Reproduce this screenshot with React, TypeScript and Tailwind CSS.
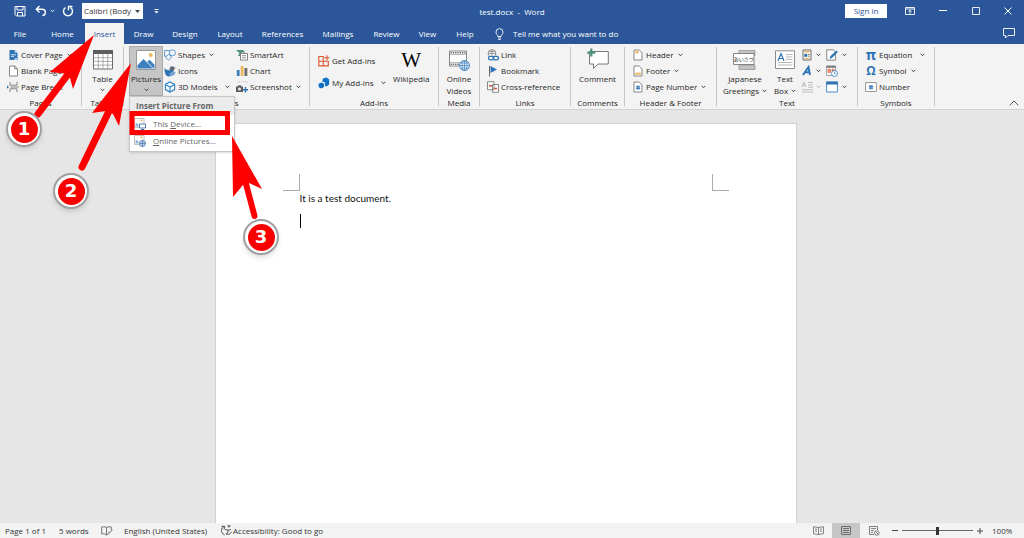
import React from 'react';

type IconProps = { className?: string };

/* ---------- small shared pieces ---------- */

const Caret: React.FC<IconProps> = ({ className = '' }) => (
  <svg viewBox="0 0 5 4" className={`h-1 w-[5px] shrink-0 ${className}`} fill="none" stroke="currentColor" strokeWidth="0.9">
    <path d="M0.7 0.9 2.5 2.7 4.3 0.9" />
  </svg>
);

type SmallButtonProps = {
  icon: React.ReactNode;
  label: string;
  caret?: boolean;
  caretGap?: string;
};

const SmallButton: React.FC<SmallButtonProps> = ({ icon, label, caret, caretGap = 'ml-1' }) => (
  <button className="flex h-4 items-center whitespace-nowrap hover:bg-[#d5d5d5]">
    <span className="mr-0.5 flex w-3 shrink-0 justify-center">{icon}</span>
    <span>{label}</span>
    {caret && <Caret className={caretGap} />}
  </button>
);

type GroupProps = {
  name: string;
  width: string;
  children: React.ReactNode;
};

const Group: React.FC<GroupProps> = ({ name, width, children }) => (
  <section aria-label={name} className={`flex shrink-0 ${width}`}>
    <div className="flex min-w-0 grow flex-col">
      <div className="flex h-[54px] pt-[3px]">{children}</div>
      <div className="text-center whitespace-nowrap">{name}</div>
    </div>
    <div className="my-[3px] w-px bg-[#c6c6c6]" />
  </section>
);

/* ---------- icons ---------- */

const CoverPageIcon = () => (
  <svg viewBox="0 0 11 12" className="h-3 w-[11px]">
    <path d="M1.5 1h5.2L9.5 3.8V11h-8z" fill="#2e74b5" />
    <path d="M6.7 1v2.8h2.8z" fill="#bcd5ec" />
    <path d="M3 5.8h5M3 7.4h3" stroke="#fff" strokeWidth="0.8" />
    <path d="M6.2 9h3.3v2H6.2z" fill="#9cc3e5" />
  </svg>
);
const BlankPageIcon = () => (
  <svg viewBox="0 0 11 12" className="h-3 w-[11px]" fill="#fff" stroke="#6b6b6b" strokeWidth="0.8">
    <path d="M1.5 1h5.2L9.5 3.8V11h-8z" />
    <path d="M6.7 1v2.8h2.8" fill="none" />
  </svg>
);
const PageBreakIcon = () => (
  <svg viewBox="0 0 12 12" className="h-3 w-3" fill="none" stroke="#6b6b6b" strokeWidth="0.8">
    <path d="M3 .8v3.4h7V.8M3 11.2V7.8h7v3.4M3.5 6H12" />
    <path d="M0 4.2 2 6 0 7.8z" fill="#2e74b5" stroke="none" />
  </svg>
);
const TableIcon = () => (
  <svg viewBox="0 0 20 20" className="h-5 w-5">
    <path d="M.5.5h19v18.5H.5z" fill="#fff" stroke="#6b6b6b" />
    <path d="M0 0h20v4H0z" fill="#5d5d5d" />
    <path d="M5.3 4v15M10 4v15M14.7 4v15M1 7.7h18M1 11.4h18M1 15.1h18" stroke="#8c8c8c" strokeWidth="0.7" />
  </svg>
);
const PicturesIcon = () => (
  <svg viewBox="0 0 20 20" className="h-5 w-5">
    <path d="M.5.5h19v19H.5z" fill="#fff" stroke="#858585" strokeWidth="0.8" />
    <circle cx="14.7" cy="5" r="2" fill="#edb95e" />
    <path d="M1.5 18.5v-3.2L7.5 9l9.5 9.5z" fill="#3e7fbd" />
    <path d="m11.2 11.8 2.4-2 4.9 5v3.7h-.9z" fill="#3e7fbd" />
  </svg>
);
const ShapesIcon = () => (
  <svg viewBox="0 0 12 12" className="h-3 w-3" fill="#f3f8fd" stroke="#3e7fbd" strokeWidth="0.8">
    <path d="M.6 1.6h5.8v5.6H.6z" />
    <circle cx="8.4" cy="3.8" r="3" />
    <path d="m4.5 5.2 3.1 3-3.1 3-3-3z" />
  </svg>
);
const IconsIcon = () => (
  <svg viewBox="0 0 12 12" className="h-3 w-3">
    <path d="M5.5 4.8C5.3 2 7.3.6 9 1.4c.8.3 1 .8 1.2 1.1l1.5.2-1.4 1.3c0 1.7-1.2 2.6-2.8 2.6z" fill="#5f6b76" />
    <path d="M.5 3c1.500 2.200 4.500 2.400 8.500 2.300 1 3.700-1 6.200-4.200 6.200C2.200 11.500.3 8 .5 3z" fill="#2e74b5" />
    <path d="M5 10c1-3 3.500-4 6.500-3-.3 3-3.300 5-6.500 3z" fill="#70a5d3" />
  </svg>
);
const ModelsIcon = () => (
  <svg viewBox="0 0 12 12" className="h-3 w-3" fill="#fff" stroke="#2680c8" strokeWidth="1.1">
    <path d="m6 .9 4.6 2.5v5.2L6 11.1 1.4 8.6V3.4z" />
    <path d="M1.4 3.4 6 6l4.6-2.6M6 6v5" />
  </svg>
);
const SmartArtIcon = () => (
  <svg viewBox="0 0 12 12" className="h-3 w-3">
    <path d="M0 1h7l2.5 2.5H5V7H2L3.5 4z" fill="#4d9277" />
    <path d="M4.5 4.5h7v6.6h-7z" fill="#fff" stroke="#6b6b6b" strokeWidth="0.8" />
    <path d="M6 6.7h4M6 8.800h4" stroke="#6b6b6b" strokeWidth="0.7" />
  </svg>
);
const ChartIcon = () => (
  <svg viewBox="0 0 12 12" className="h-3 w-3">
    <path d="M.8 5h2.8v6H.8z" fill="#3e7fbd" />
    <path d="M4.7 1h2.8v10H4.7z" fill="#edb95e" />
    <path d="M8.5 3h2.8v8H8.5z" fill="#6b6b6b" />
  </svg>
);
const ScreenshotIcon = () => (
  <svg viewBox="0 0 12 12" className="h-3 w-3">
    <path d="M3 .7h7.5M2 .7v2M11 .7v2" stroke="#9a9a9a" strokeWidth="0.6" strokeDasharray="1 1" fill="none" />
    <path d="M0 5.5h1.7l.8-1.3h2.2l.8 1.3H7V11H0z" fill="#5d5d5d" />
    <circle cx="3.5" cy="8" r="1.6" fill="#e8e8e8" />
    <path d="M9.5 6v5.5M6.9 8.8H12" stroke="#2e74b5" strokeWidth="1.4" />
  </svg>
);
const GetAddinsIcon = () => (
  <svg viewBox="0 0 12 12" className="h-3 w-3" fill="none" stroke="#e0552f" strokeWidth="1.1">
    <path d="M.8 1.5h4.5v4.7H.8zM.8 6.2h4.5v4.7H.8zM5.3 6.2h5v4.7h-5zM9 .2v5M6.5 2.700h5" />
  </svg>
);
const MyAddinsIcon = () => (
  <svg viewBox="0 0 12 12" className="h-3 w-3" fill="#0f6fc6">
    <path d="M5 1.5 8.500.6l2.7 1.800v5L8.500 9.600 7 8.800V5.600L4.200 4.600z" />
    <path d="m3.2 5.4 2.900 1.400v3.100L3.200 11.400.6 9.900V6.800z" />
  </svg>
);
const OnlineVideosIcon = () => (
  <svg viewBox="0 0 21 21" className="h-[21px] w-[21px]">
    <path d="M.5 1h17v15H.5z" fill="#fff" stroke="#6b6b6b" strokeWidth="0.8" />
    <path d="M1.5 2.7h15M1.5 14.3h15" stroke="#5d5d5d" strokeWidth="1.4" strokeDasharray="1.3 1" />
    <path d="M1 4.5h16M1 12.5h16" stroke="#8c8c8c" strokeWidth="0.6" />
    <circle cx="15.5" cy="15.5" r="5" fill="#e8f1f9" stroke="#3e7fbd" strokeWidth="0.9" />
    <path d="M10.5 15.5h10M15.5 10.5v10M11.5 13h8M11.5 18h8" stroke="#3e7fbd" strokeWidth="0.7" />
    <ellipse cx="15.5" cy="15.5" rx="2.4" ry="5" fill="none" stroke="#3e7fbd" strokeWidth="0.7" />
  </svg>
);
const LinkIcon = () => (
  <svg viewBox="0 0 12 12" className="h-3 w-3" fill="none">
    <circle cx="5" cy="4.5" r="3.9" stroke="#6b6b6b" strokeWidth="0.7" />
    <path d="M1.2 4.5h7.600M5 .6v7.500M2 2.500h6" stroke="#6b6b6b" strokeWidth="0.6" />
    <path d="M1.5 6.5h10v5h-10z" fill="#f3f3f3" />
    <rect x="1.4" y="7.4" width="5.5" height="3.4" rx="1.7" stroke="#2e74b5" strokeWidth="1.2" />
    <rect x="6" y="7.4" width="5.5" height="3.4" rx="1.7" stroke="#2e74b5" strokeWidth="1.2" />
  </svg>
);
const BookmarkIcon = () => (
  <svg viewBox="0 0 12 12" className="h-3 w-3">
    <path d="M2.5.8v10.700" stroke="#6b6b6b" />
    <path d="m3.5 1 6.500 3.500L3.500 8z" fill="#2e74b5" />
  </svg>
);
const CrossRefIcon = () => (
  <svg viewBox="0 0 12 12" className="h-3 w-3" fill="#fff" stroke="#6b6b6b" strokeWidth="0.8">
    <path d="M.5.7H7v8H.5zM5.5 3.5h6v7.800h-6z" />
    <path d="M2 4.7h3M7 7.500h3" stroke="#d1492e" strokeWidth="1.4" />
  </svg>
);
const CommentIcon = () => (
  <svg viewBox="0 0 22 22" className="h-[22px] w-[22px]">
    <path d="M2.5 3.5h18.800V16H11l-4.500 4.500V16h-4z" fill="#fff" stroke="#6b6b6b" strokeWidth="0.9" />
    <path d="M4.3.6v8M.3 4.600h8" stroke="#4d9277" strokeWidth="2.2" />
  </svg>
);

type PageIconProps = { children: React.ReactNode };

const PageIcon: React.FC<PageIconProps> = ({ children }) => (
  <svg viewBox="0 0 10 12" className="h-3 w-[10px]">
    <path d="M1 1h5.200L9 3.800V11H1z" fill="#fff" stroke="#6b6b6b" strokeWidth="0.8" />
    {children}
  </svg>
);
const HeaderIcon = () => (
  <PageIcon>
    <path d="M2.2 2.2h3.500v2H2.200z" fill="#edb95e" />
  </PageIcon>
);
const FooterIcon = () => (
  <PageIcon>
    <path d="M2.2 7.7h5.600v2H2.200z" fill="#edb95e" />
  </PageIcon>
);
const PageNumberIcon = () => (
  <PageIcon>
    <path d="M4.3 4.5v4.200M5.900 4.500v4.200M3 5.800h4.200M3 7.400h4.200" stroke="#2e74b5" strokeWidth="0.9" />
  </PageIcon>
);

const GreetingsIcon = () => (
  <svg viewBox="0 0 24 20" className="h-5 w-6">
    <path d="M6 .5h16v5H6zM6 15h16v4.500H6z" fill="#c4c4c4" stroke="#8c8c8c" strokeWidth="0.7" />
    <path d="M.5 3.5H21v11H.5z" fill="#fff" stroke="#6b6b6b" strokeWidth="0.8" />
    <text x="10.8" y="11.2" fontSize="5" textAnchor="middle" fill="#222" className="font-['Noto_Sans_CJK_JP',sans-serif]">
      あいさつ
    </text>
  </svg>
);
const TextBoxIcon = () => (
  <svg viewBox="0 0 20 20" className="h-5 w-5">
    <path d="M.5.8h19v17.700H.5z" fill="#fff" stroke="#8c8c8c" />
    <path d="M3 11 6 3.500 9 11M4 8.500h4" fill="none" stroke="#2e74b5" strokeWidth="1.2" />
    <path d="M11 4.500h6.500M11 7h6.500M11 9.500h6.500M3 12.500h14.500M3 15h14.500" stroke="#9a9a9a" strokeWidth="0.7" />
  </svg>
);
const QuickPartsIcon = () => (
  <svg viewBox="0 0 12 12" className="h-3 w-3">
    <path d="M2 1h8v10H2z" fill="#fff" stroke="#6b6b6b" />
    <path d="M3.3 2.7h5.400" stroke="#edb95e" strokeWidth="1.6" />
    <path d="M3.3 4.8h3v3h-3z" fill="#2e74b5" />
    <path d="M7 5.500h2M7 7.200h2" stroke="#6b6b6b" strokeWidth="0.8" />
    <path d="M3.3 9.4h5.400" stroke="#edb95e" strokeWidth="1.2" />
  </svg>
);
const WordArtIcon = () => (
  <svg viewBox="0 0 12 12" className="h-3 w-3" fill="none" stroke="#2e74b5" strokeWidth="1.9">
    <path d="M2 10 7.500 2 9 10M4 7.300h4.500" />
  </svg>
);
const DropCapIcon = () => (
  <svg viewBox="0 0 12 12" className="h-3 w-3" fill="none" stroke="#b0b0b0" strokeWidth="0.8">
    <path d="M.8 6 2.800 1l2 5M1.500 4.300h2.600M7 1.500h5M7 4h5M7 6.300h5M1 8.700h11M1 11h11" />
  </svg>
);
const SignatureIcon = () => (
  <svg viewBox="0 0 12 12" className="h-3 w-3">
    <path d="M.8.8h6.500L9.500 3v8.200H.8z" fill="#fff" stroke="#6b6b6b" strokeWidth="0.8" />
    <path d="m3.5 10 1-3 5.800-5.500 1.500 1.500L6.300 8.700z" fill="#2e74b5" />
  </svg>
);
const DateIcon = () => (
  <svg viewBox="0 0 12 12" className="h-3 w-3">
    <path d="M.6 1h9v9.500h-9z" fill="#fff" stroke="#8c8c8c" strokeWidth="0.8" />
    <path d="M.6.8h9v2h-9z" fill="#7a7a7a" />
    <path d="M2 4.300h2.500v3H2zM6 4.300h2v1.500H6z" fill="#f3b49c" stroke="#e0552f" strokeWidth="0.8" />
    <circle cx="8.5" cy="8.5" r="3" fill="#fff" stroke="#3e7fbd" strokeWidth="0.9" />
    <path d="M8.5 6.8v1.900h1.400" stroke="#3e7fbd" strokeWidth="0.8" fill="none" />
  </svg>
);
const ObjectIcon = () => (
  <svg viewBox="0 0 12 12" className="h-3 w-3">
    <path d="M.6 1h10.800v10H.6z" fill="#fff" stroke="#3e7fbd" strokeWidth="0.9" />
    <path d="M.2.7h11.600v2.800H.2z" fill="#2e74b5" />
  </svg>
);
const NumberIcon = () => (
  <svg viewBox="0 0 12 12" className="h-3 w-3">
    <path d="M.6 1.500h10.800v9H.6z" fill="#fff" stroke="#8c8c8c" strokeWidth="0.9" />
    <path d="M5.2 4v4.500M6.900 4v4.500M3.800 5.400h4.500M3.800 7.100h4.500" stroke="#2e74b5" strokeWidth="0.9" />
  </svg>
);
const PictureSourceIcon: React.FC<{ online?: boolean }> = ({ online }) => (
  <svg viewBox="0 0 12 12" className="h-3 w-3">
    <path d="M.5.5H10v9H.5z" fill="#fafafa" stroke="#a8a8a8" strokeWidth="0.7" />
    <path d="M1.5 8.500V6l1.300-1 1.700 1.500v2z" fill="#8fb3d6" />
    <circle cx="7.5" cy="2.5" r="0.9" fill="#edb95e" />
    {online ? (
      <>
        <circle cx="8.5" cy="8.5" r="3" fill="#c4d9ee" stroke="#3e6fa8" strokeWidth="0.8" />
        <path d="M5.5 8.500h6M8.500 5.500v6" stroke="#3e6fa8" strokeWidth="0.7" />
      </>
    ) : (
      <>
        <path d="M5.5 6h6v4h-6z" fill="#fff" stroke="#3e6fa8" strokeWidth="0.9" />
        <path d="M7 11.500h3" stroke="#3e6fa8" />
      </>
    )}
  </svg>
);

/* ---------- title bar and tabs ---------- */

const TitleBar = () => (
  <header className="grid h-[22px] grid-cols-[1fr_auto_1fr] items-center text-white">
    <div className="flex items-center pl-[14px]">
      <button aria-label="Save" className="mr-[9px]">
        <svg viewBox="0 0 12 12" className="h-3 w-3" fill="none" stroke="currentColor">
          <path d="M1 1.500h10v9.500H2.500L1 9.500zM3 1.500v3.500h6V1.500M3.500 11V7.500h5V11" />
        </svg>
      </button>
      <button aria-label="Undo" className="flex items-center">
        <svg viewBox="0 0 12 12" className="h-3 w-3" fill="none" stroke="currentColor" strokeWidth="1.4">
          <path d="M4.5 1 1.300 4.200l3.200 3.200M1.500 4.200h5.700c4 0 4.300 5.800.3 6.300" />
        </svg>
        <Caret className="ml-[3px]" />
      </button>
      <button aria-label="Redo" className="ml-[7px]">
        <svg viewBox="0 0 12 12" className="h-3 w-3" fill="none" stroke="currentColor" strokeWidth="1.4">
          <path d="M3.5 2.500a4.500 4.500 0 1 0 5 0M6.500 5.300V1.500h4" />
        </svg>
      </button>
      <div className="relative ml-2 flex items-center">
        <select aria-label="Font" className="h-4 w-[61px] appearance-none bg-white pl-0.5 text-[8px] leading-4 text-[#333]">
          <option>Calibri (Body</option>
        </select>
        <svg viewBox="0 0 5 3" className="pointer-events-none absolute right-[3px] h-[3px] w-[5px]" fill="#444">
          <path d="M0 0h5L2.500 3z" />
        </svg>
      </div>
      <button aria-label="Customize Quick Access Toolbar" className="ml-[11px]">
        <svg viewBox="0 0 5 5" className="h-[5px] w-[5px]" fill="currentColor">
          <path d="M.5 0h4v.9h-4zM.3 2.200h4.400L2.500 4.600z" />
        </svg>
      </button>
    </div>
    <h1 className="pt-0.5 text-[8px] whitespace-pre">test.docx  -  Word</h1>
    <div className="flex items-center justify-end pr-3">
      <button className="h-[14px] w-[42px] bg-white text-[8px] leading-[14px] text-[#2b579a]">Sign in</button>
      <button aria-label="Ribbon display options" className="ml-[18px]">
        <svg viewBox="0 0 10 8" className="h-2 w-[10px]" fill="none" stroke="currentColor" strokeWidth="0.9">
          <path d="M.5.5h9v7h-9zM.5 2h9M5 6.500V3.300M3.500 4.700 5 3.300l1.500 1.400" />
        </svg>
      </button>
      <button aria-label="Minimize" className="ml-6">
        <svg viewBox="0 0 8 8" className="h-2 w-2" stroke="currentColor">
          <path d="M0 3.500h8" />
        </svg>
      </button>
      <button aria-label="Maximize" className="ml-[25px]">
        <svg viewBox="0 0 8 8" className="h-2 w-2" fill="none" stroke="currentColor" strokeWidth="0.9">
          <path d="M.5.5h7v7h-7z" />
        </svg>
      </button>
      <button aria-label="Close" className="ml-6">
        <svg viewBox="0 0 8 8" className="h-2 w-2" stroke="currentColor">
          <path d="m.5.5 7 7M7.500.5l-7 7" />
        </svg>
      </button>
    </div>
  </header>
);

const TABS = [
  { name: 'File', width: 'w-10' },
  { name: 'Home', width: 'w-[45px]' },
  { name: 'Insert', width: 'w-[39px]' },
  { name: 'Draw', width: 'w-[39px]' },
  { name: 'Design', width: 'w-11' },
  { name: 'Layout', width: 'w-[46px]' },
  { name: 'References', width: 'w-[59px]' },
  { name: 'Mailings', width: 'w-[52px]' },
  { name: 'Review', width: 'w-[45px]' },
  { name: 'View', width: 'w-[37px]' },
  { name: 'Help', width: 'w-[38px]' },
];

const TabStrip = () => (
  <nav className="flex h-[22px] items-end text-[8px] text-white">
    {TABS.map((tab) => (
      <button
        key={tab.name}
        className={`h-[21px] shrink-0 ${tab.width} ${tab.name === 'Insert' ? 'bg-[#f3f3f3] text-[#2b579a]' : ''}`}
      >
        {tab.name}
      </button>
    ))}
    <button className="ml-[11px] flex h-[21px] items-center gap-[9px] whitespace-nowrap">
      <svg viewBox="0 0 9 12" className="h-3 w-[9px]" fill="none" stroke="currentColor" strokeWidth="0.9">
        <path d="M2.8 8.500C2.800 6.800 1 6.300 1 4.100a3.500 3.500 0 0 1 7 0c0 2.200-1.800 2.700-1.800 4.400zM3 10h3M3.300 11.400h2.400" />
      </svg>
      Tell me what you want to do
    </button>
    <button aria-label="Comments" className="mr-[9px] mb-[5px] ml-auto">
      <svg viewBox="0 0 12 12" className="h-3 w-3" fill="none" stroke="currentColor" strokeWidth="0.9">
        <path d="M.5 1.500h11v7H5L2.500 11V8.500h-2z" />
      </svg>
    </button>
  </nav>
);

/* ---------- ribbon ---------- */

const PicturesMenu = () => (
  <div role="menu" className="absolute top-[49px] left-0 z-10 w-[106px] border border-[#c6c6c6] bg-white pb-0.5 text-[#666] shadow-sm">
    <div className="h-[18px] bg-[#ebebeb] pl-1.5 leading-[18px] font-bold whitespace-nowrap">Insert Picture From</div>
    <button role="menuitem" className="flex h-[17px] w-full items-center gap-[7px] pl-1 whitespace-nowrap">
      <PictureSourceIcon />
      <span>This <u>D</u>evice...</span>
    </button>
    <button role="menuitem" className="flex h-[17px] w-full items-center gap-[7px] pl-1 whitespace-nowrap">
      <PictureSourceIcon online />
      <span><u>O</u>nline Pictures...</span>
    </button>
  </div>
);

const Ribbon = () => (
  <div className="flex h-[66px] border-b border-[#d2d2d2] bg-[#f3f3f3] text-[8px] leading-3 text-[#262626]">
    <Group name="Pages" width="w-[82px]">
      <div className="pl-[7px]">
        <SmallButton icon={<CoverPageIcon />} label="Cover Page" caret />
        <SmallButton icon={<BlankPageIcon />} label="Blank Page" />
        <SmallButton icon={<PageBreakIcon />} label="Page Break" />
      </div>
    </Group>

    <Group name="Tables" width="w-[42px]">
      <button className="flex w-full flex-col items-center justify-start pt-[3px]">
        <TableIcon />
        <span className="mt-[3px]">Table</span>
        <Caret className="mt-[3px]" />
      </button>
    </Group>

    <Group name="Illustrations" width="w-[186px]">
      <div className="relative ml-[5px] flex h-[49px]">
        <button aria-haspopup="menu" aria-expanded="true" className="-mt-px flex w-[34px] flex-col items-center border border-[#ababab] bg-[#c5c5c5] pt-[3px]">
          <PicturesIcon />
          <span className="mt-[3px]">Pictures</span>
          <Caret className="mt-[3px]" />
        </button>
        <PicturesMenu />
      </div>
      <div className="w-[73px] pl-px">
        <SmallButton icon={<ShapesIcon />} label="Shapes" caret />
        <SmallButton icon={<IconsIcon />} label="Icons" />
        <SmallButton icon={<ModelsIcon />} label="3D Models" caret caretGap="ml-[7px]" />
      </div>
      <div>
        <SmallButton icon={<SmartArtIcon />} label="SmartArt" />
        <SmallButton icon={<ChartIcon />} label="Chart" />
        <SmallButton icon={<ScreenshotIcon />} label="Screenshot" caret />
      </div>
    </Group>

    <Group name="Add-ins" width="w-[129px]">
      <div className="flex w-[83px] flex-col gap-[6px] pt-[6px] pl-2">
        <SmallButton icon={<GetAddinsIcon />} label="Get Add-ins" />
        <SmallButton icon={<MyAddinsIcon />} label="My Add-ins" caret caretGap="ml-2" />
      </div>
      <button className="flex flex-col items-center justify-start pt-[3px]">
        <span className="h-5 font-['Liberation_Serif',serif] text-[21px] leading-5 text-black">W</span>
        <span className="mt-[3px]">Wikipedia</span>
      </button>
    </Group>

    <Group name="Media" width="w-[41px]">
      <button className="flex w-full flex-col items-center justify-start pt-[3px]">
        <OnlineVideosIcon />
        <span className="mt-0.5">Online</span>
        <span>Videos</span>
      </button>
    </Group>

    <Group name="Links" width="w-[91px]">
      <div className="pl-[7px]">
        <SmallButton icon={<LinkIcon />} label="Link" />
        <SmallButton icon={<BookmarkIcon />} label="Bookmark" />
        <SmallButton icon={<CrossRefIcon />} label="Cross-reference" />
      </div>
    </Group>

    <Group name="Comments" width="w-[54px]">
      <button className="flex w-full flex-col items-center justify-start pt-px">
        <CommentIcon />
        <span className="mt-[3px]">Comment</span>
      </button>
    </Group>

    <Group name="Header & Footer" width="w-[92px]">
      <div className="pl-[7px]">
        <SmallButton icon={<HeaderIcon />} label="Header" caret />
        <SmallButton icon={<FooterIcon />} label="Footer" caret />
        <SmallButton icon={<PageNumberIcon />} label="Page Number" caret />
      </div>
    </Group>

    <Group name="Text" width="w-[141px]">
      <button className="flex w-14 flex-col items-center justify-start pt-[3px]">
        <GreetingsIcon />
        <span className="mt-[3px]">Japanese</span>
        <span className="flex items-center gap-[3px]">Greetings <Caret /></span>
      </button>
      <button className="flex w-6 flex-col items-center justify-start pt-[3px]">
        <TextBoxIcon />
        <span className="mt-[3px]">Text</span>
        <span className="flex items-center gap-[3px]">Box <Caret /></span>
      </button>
      <div className="ml-1 grid grid-cols-[25px_auto] content-start">
        <button aria-label="Quick Parts" className="flex h-4 items-center gap-[3px]"><QuickPartsIcon /><Caret /></button>
        <button aria-label="Signature Line" className="flex h-4 items-center gap-1"><SignatureIcon /><Caret /></button>
        <button aria-label="WordArt" className="flex h-4 items-center gap-[3px]"><WordArtIcon /><Caret /></button>
        <button aria-label="Date and Time" className="flex h-4 items-center"><DateIcon /></button>
        <button aria-label="Drop Cap" className="flex h-4 items-center gap-[3px] text-[#b0b0b0]"><DropCapIcon /><Caret /></button>
        <button aria-label="Object" className="flex h-4 items-center gap-1"><ObjectIcon /><Caret /></button>
      </div>
    </Group>

    <Group name="Symbols" width="w-[77px]">
      <div className="pl-[7px]">
        <SmallButton icon={<span className="text-[14px] font-bold text-[#2e74b5]">π</span>} label="Equation" caret caretGap="ml-2" />
        <SmallButton icon={<span className="text-[12px] font-bold text-[#2e74b5]">Ω</span>} label="Symbol" caret />
        <SmallButton icon={<NumberIcon />} label="Number" />
      </div>
    </Group>

    <button aria-label="Collapse the Ribbon" className="mr-[5px] mb-[3px] ml-auto self-end">
      <svg viewBox="0 0 10 6" className="h-1.5 w-[10px]" fill="none" stroke="#555">
        <path d="M.7 5.300 5 1l4.300 4.300" />
      </svg>
    </button>
  </div>
);

/* ---------- document and status bar ---------- */

const DocumentArea = () => (
  <main className="flex grow justify-center bg-[#e6e6e6] pt-[13px] pr-[13px]">
    <article className="w-[582px] border border-b-0 border-[#d0d0d0] bg-white px-[67px] pt-[50px]">
      <div className="flex justify-between">
        <div className="h-[17px] w-[17px] border-r border-b border-[#ababab]" />
        <div className="h-[17px] w-[17px] border-b border-l border-[#ababab]" />
      </div>
      <div className="pl-[17px] font-['Lato',sans-serif] text-[10px] leading-[14px] text-[#111]">
        <p>It is a test document.</p>
        <div className="mt-[9px] h-[14px] w-px bg-black" />
      </div>
    </article>
  </main>
);

const StatusBar = () => (
  <footer className="flex h-[15px] items-center bg-[#f3f3f3] pl-[5px] text-[8px] whitespace-nowrap text-[#333]">
    <span className="w-[54px]">Page 1 of 1</span>
    <span className="w-[42px]">5 words</span>
    <button aria-label="Proofing" className="mr-[11px]">
      <svg viewBox="0 0 12 10" className="h-[10px] w-3" fill="none" stroke="#555" strokeWidth="0.8">
        <path d="M5.5 9V1.500C4 .7 2 .7.7 1v7c1.500-.3 3.300-.3 4.800 1 1-.9 2-1.100 3-1.200M5.500 1.500C7 .7 9 .7 10.300 1v3M7 5.500 8.500 7l3-3.500" />
      </svg>
    </button>
    <span className="w-24">English (United States)</span>
    <button className="flex items-center gap-px">
      <svg viewBox="0 0 12 11" className="h-[11px] w-3" fill="none" stroke="#444" strokeWidth="0.9">
        <path d="M4.5 1.500C.5 2.500.3 8 4.500 9.800M1.300 1.300l3.400.1-.6 3M8 1a1 1 0 1 1 0 .1M5 4.500l3 .7 3-.7M8 5.200V7L6 10M6.500 8l2 2L12 6.500" />
      </svg>
      Accessibility: Good to go
    </button>
    <div className="ml-auto flex h-full items-center">
      <button aria-label="Read Mode" className="flex h-full w-7 items-center justify-center">
        <svg viewBox="0 0 11 9" className="h-[9px] w-[11px]" fill="none" stroke="#666" strokeWidth="0.8">
          <path d="M5.5 8.500v-7L.5.7v7l5 .8 5-.8v-7l-5 .8M2 3l2 .3M2 5l2 .3M7 3.300 9 3M7 5.300 9 5" />
        </svg>
      </button>
      <button aria-label="Print Layout" className="flex h-full w-7 items-center justify-center bg-[#c6c6c6]">
        <svg viewBox="0 0 10 9" className="h-[9px] w-[10px]" fill="none" stroke="#555" strokeWidth="0.8">
          <path d="M.5.5h9v8h-9zM2 2.500h6M2 4.500h6M2 6.500h6" />
        </svg>
      </button>
      <button aria-label="Web Layout" className="flex h-full w-7 items-center justify-center">
        <svg viewBox="0 0 11 10" className="h-[10px] w-[11px]" fill="none" stroke="#666" strokeWidth="0.8">
          <path d="M5 8.500H.5v-8h8V4M2 2.500h5M2 4.500h3M2 6.500h2" />
          <circle cx="7.8" cy="7" r="2.3" />
          <path d="m6.5 5.500 3 3" />
        </svg>
      </button>
      <button aria-label="Zoom out" className="ml-1 h-px w-[6px] bg-[#444]" />
      <input
        type="range"
        aria-label="Zoom"
        defaultValue={50}
        className="mx-1 h-2 w-[71px] appearance-none bg-[linear-gradient(#666,#666)] bg-[length:100%_1px] bg-center bg-no-repeat [&::-webkit-slider-thumb]:h-2 [&::-webkit-slider-thumb]:w-[3px] [&::-webkit-slider-thumb]:appearance-none [&::-webkit-slider-thumb]:bg-[#333]"
      />
      <button aria-label="Zoom in">
        <svg viewBox="0 0 6 6" className="h-1.5 w-1.5" stroke="#444">
          <path d="M0 3h6M3 0v6" />
        </svg>
      </button>
      <span className="ml-[9px] w-8">100%</span>
    </div>
  </footer>
);

/* ---------- tutorial annotations, drawn over the window ---------- */

const STEPS = [
  { n: 1, place: 'top-[111px] left-[6px]' },
  { n: 2, place: 'top-[173px] left-[53px]' },
  { n: 3, place: 'top-[219px] left-[243px]' },
];

const Annotations = () => (
  <div className="pointer-events-none absolute top-0 left-0 z-20">
    <svg viewBox="0 0 300 270" className="h-[270px] w-[300px]" fill="#f00" stroke="#f00">
      <path d="M94 35 50 72l14 1.500 6 4.500 3 11z" stroke="none" />
      <path d="M69 73 38 114" strokeWidth="7" strokeLinecap="round" />
      <path d="M131 63 92 113l14-2 7 3 6 12z" stroke="none" />
      <path d="m110 109-28 58" strokeWidth="7" strokeLinecap="round" />
      <path d="m232 136 1 61 10-12 6-2 13 6z" stroke="none" />
      <path d="m245 180 9.500 36" strokeWidth="6" strokeLinecap="round" />
      <path d="M132 113.500h95.500v19H132z" fill="none" strokeWidth="5" />
    </svg>
    {STEPS.map((step) => (
      <div
        key={step.n}
        className={`absolute flex h-9 w-9 items-center justify-center rounded-full border-2 border-[#a0a0a0] bg-white shadow-md ${step.place}`}
      >
        <span className="flex h-[27px] w-[27px] items-center justify-center rounded-full bg-[#f80000] font-['DejaVu_Sans',sans-serif] text-[18px] leading-none font-bold text-white">
          {step.n}
        </span>
      </div>
    ))}
  </div>
);

export default function App() {
  return (
    <div className="relative flex min-h-screen flex-col overflow-hidden font-['Open_Sans','Noto_Sans',sans-serif]">
      <div className="bg-[#2b579a]">
        <TitleBar />
        <TabStrip />
      </div>
      <Ribbon />
      <DocumentArea />
      <StatusBar />
      <Annotations />
    </div>
  );
}
